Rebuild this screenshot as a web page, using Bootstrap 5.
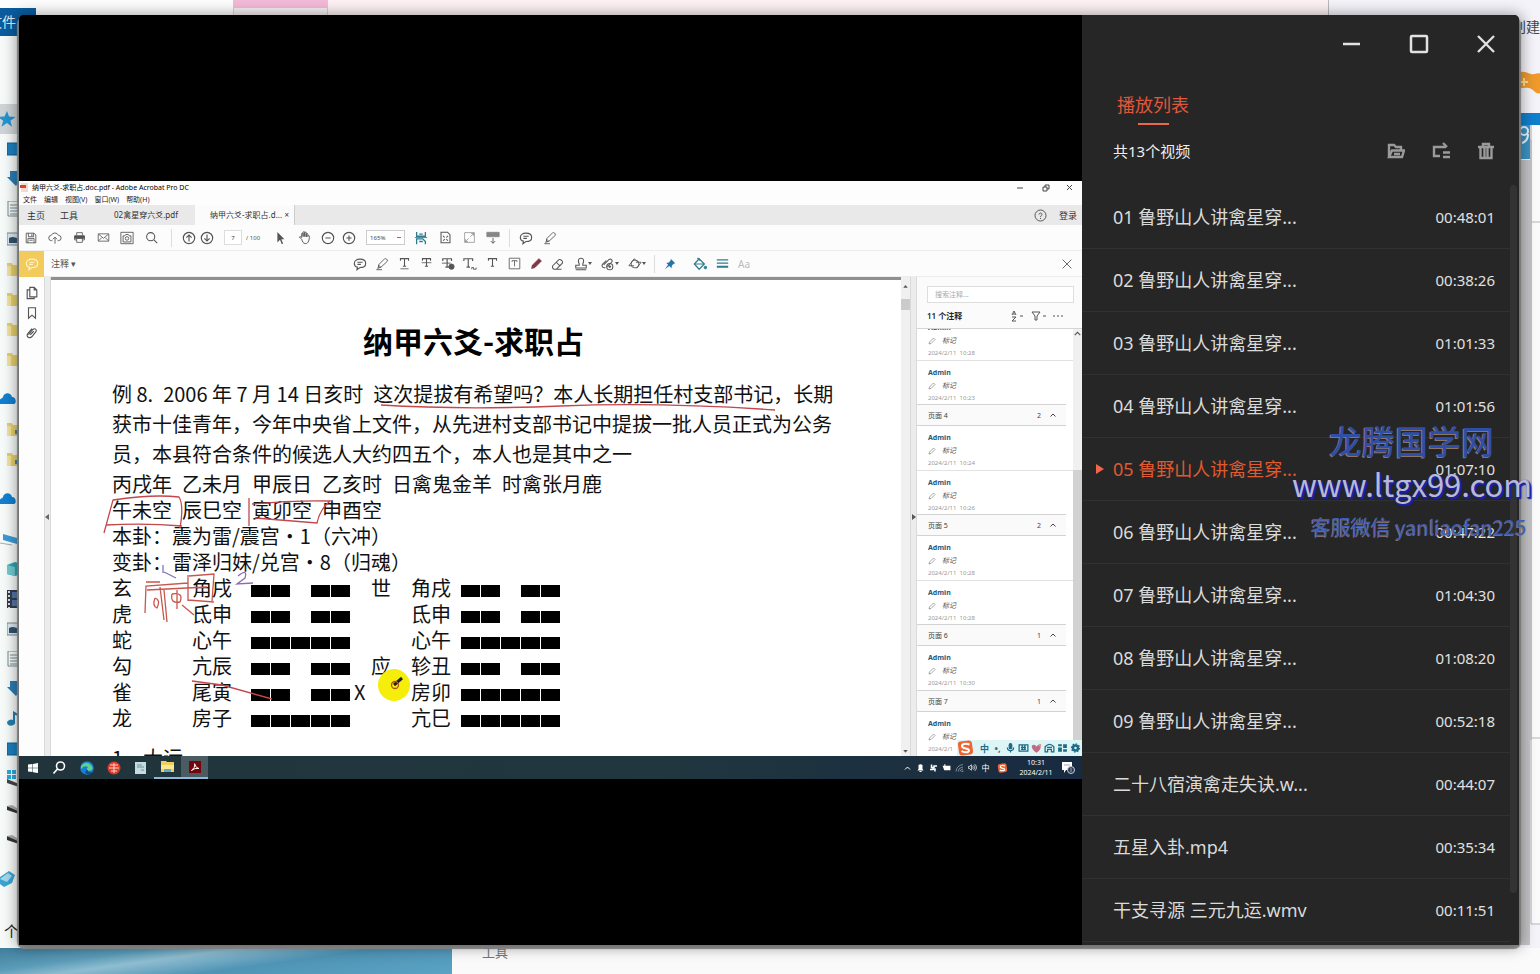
<!DOCTYPE html>
<html lang="zh-CN">
<head>
<meta charset="utf-8">
<meta name="viewport" content="width=device-width, initial-scale=1">
<title>播放列表</title>
<link href="https://cdn.jsdelivr.net/npm/bootstrap@5.3.0/dist/css/bootstrap.min.css" rel="stylesheet">
<style>
  body { font-family: "Noto Sans", "Noto Sans CJK SC", sans-serif; background: #fbfbfc; }
  button, input, select { font-family: inherit; }
  svg { display: block; flex: none; }
  .bare { border: 0; background: none; padding: 0; color: inherit; }

  /* desktop and the windows behind the player */
  .desktop { min-height: 100vh; overflow: hidden; isolation: isolate; }
  .behind { position: absolute; overflow: hidden; }
  .top-strip { left: 0; right: 212px; top: 0; height: 30px; background: linear-gradient(90deg, #fdfdfd 0 328px, #fdf1f3 328px); }
  .pink-tab { left: 233px; top: 0; width: 95px; height: 16px; background: linear-gradient(#f3bad8 0 8px, #f5f0f2 8px); border: solid #d5cdd2; border-width: 0 1px; }
  .right-window { right: 0; width: 212px; top: 0; bottom: 0; background: #f3f3f9; border-left: 1px solid #b9b9bd; font-size: 14px; color: #444; }
  .file-tab { left: 0; top: 8px; width: 36px; height: 28px; background: #0b5c9f; color: #dfeaf4; font-size: 14px; line-height: 28px; }
  .file-tab span { margin-left: -12px; }
  .explorer { left: 0; top: 36px; bottom: 25px; width: 30px; background: #f6faf8; padding-top: 68px; }
  .explorer .cell { height: 30px; width: 30px; display: flex; align-items: center; padding-left: 7px; }
  .explorer .cell.wide-ico { padding-left: 0; }
  .explorer .cell.apart { margin-top: 10px; }
  .explorer .picked { background: #cfd3d6; }
  .explorer .item-count { padding: 26px 0 0 4px; font-size: 15px; color: #222; }
  .wallpaper { left: 0; bottom: 0; width: 452px; height: 26px; background: linear-gradient(172deg, #3f7d9c 0, #5b9cb8 25%, #8fbdd0 38%, #4f94b5 60%, #5aa3c4 100%); }
  .lower-page { left: 452px; right: 0; bottom: 0; height: 26px; background: #fafafa; color: #777; font-size: 13px; line-height: 8px; padding-left: 30px; }

  /* player window */
  .player { position: relative; margin: 15px 21px 29px 19px; height: calc(100vh - 44px); min-height: 640px; border-radius: 5px 5px 0 0; overflow: hidden; background: #000; }
  .player-shadow { border-radius: 5px; box-shadow: 0 0 14px 3px rgba(0,0,0,.36), 0 2px 1px 2px #9a9a9a; left: 19px; right: 21px; top: 17px; bottom: 29px; overflow: visible; }
  .stage { min-width: 0; background: #000; }
  .recording { background: #fdfdfd; color: #333; line-height: 1; overflow: hidden; }

  .r-title { height: 13px; font-size: 7px; padding: 0 9px 0 1px; }
  .r-menu { height: 11px; font-size: 7px; gap: 7px; padding-left: 4px; }
  .r-menu a { color: #222; }
  .r-tabs { height: 20px; background: #e9e9e9; font-size: 9px; padding-right: 5px; }
  .r-tabs .home-tabs { gap: 15px; padding: 0 0 0 8px; width: 80px; }
  .doc-tab { font-size: 8px; }
  .doc-tab.first { width: 96px; padding-left: 15px; }
  .doc-tab.open { width: 100px; background: #fbfbfb; border-right: 1px solid #ccc; padding: 0 5px 0 15px; height: 20px; }
  .r-bar { height: 26px; color: #555; border-bottom: 1px solid #ededed; background: #fcfcfc; }
  .r-bar .i24 { width: 24px; display: flex; justify-content: center; }
  .r-bar .i18 { width: 18px; display: flex; justify-content: center; }
  .i22 { width: 22px; display: flex; justify-content: center; }
  .i27 { width: 27px; display: flex; justify-content: center; align-items: center; }
  .r-bar .rule { width: 1px; height: 18px; background: #ddd; }
  .page-no { width: 18px; height: 15px; border: 1px solid #ddd; font-size: 6px; padding: 0; text-align: center; color: #444; background: #fff; }
  .zoom-pick { width: 39px; height: 15px; border: 1px solid #ccc; font-size: 6px; padding: 0 3px; appearance: none; color: #444; border-radius: 0; background: #fff linear-gradient(#777,#777) 30px 6px / 4px 1px no-repeat; }
  .teal { color: #2e7c90; }
  .note-tool { width: 25px; height: 26px; background: #f3cb5c; color: #fff3cc; display: flex; align-items: center; justify-content: center; }

  .r-body { height: 479px; position: relative; }
  .rail { width: 25px; background: #fdfdfd; color: #555; padding-top: 9px; gap: 6px; }
  .splitter { width: 7px; background: #ececec; border: solid #dadada; border-width: 0 1px; color: #666; }
  .page-view { border-top: 3px solid #8f8f8f; background: #fff; position: relative; overflow: hidden; color: #111; min-width: 0; }
  .page-text { padding-left: 61px; font-family: "Noto Sans CJK SC", sans-serif; font-size: 20px; font-weight: 400; white-space: pre; }
  .page-title { font-size: 30px; font-weight: 700; line-height: 34px; margin: 43px 0 22px; padding-left: 251px; color: #000; }
  .loose { line-height: 30px; margin-bottom: 2px; }
  .tight { line-height: 26px; }
  .gua { line-height: 26px; border-collapse: collapse; table-layout: fixed; width: 449px; }
  .gua td { padding: 0; height: 26px; vertical-align: top; }
  .yao { width: 99px; height: 12px; margin-top: 10px; background: repeating-linear-gradient(90deg, #000 0 19px, #fff 19px 20px); }
  .yao.yin { background: linear-gradient(90deg, transparent 39px, #fff 39px 60px, transparent 60px), repeating-linear-gradient(90deg, #000 0 19px, #fff 19px 20px); }
  .page-tail { padding-top: 17px; }
  .ink { position: absolute; left: 0; top: 0; pointer-events: none; }
  .v-scroll { width: 9px; background: #f0f0f0; color: #555; padding: 6px 0 2px; }
  .v-scroll i { display: block; width: 9px; height: 11px; background: #cbcbcb; margin-top: 10px; }

  .notes { width: 165px; background: #fbfbfb; overflow: hidden; }
  .find-note { margin: 9px 8px 0 10px; height: 17px; border: 1px solid #ddd; font-size: 7px; padding: 0 7px; background: #fff; border-radius: 0; }
  .find-note::placeholder { color: #aaa; opacity: 1; }
  .notes-head { height: 25px; padding: 0 17px 0 10px; font-size: 8px; color: #222; }
  .notes-list { border-top: 1px solid #d5d5d5; overflow: hidden; height: 428px; background: #fff; }
  .notes-list > div:first-child { margin-top: -13px; }
  .entry { height: 44px; padding: 5px 0 0 11px; line-height: 13px; font-size: 7px; color: #666; }
  .entry b { display: block; color: #285a7c; }
  .entry em { display: flex; gap: 6px; align-items: center; color: #555; }
  .entry small { display: block; font-size: 6px; line-height: 13px; color: #999; white-space: pre; }
  .entry + .entry { border-top: 1px solid #e2e2e2; }
  .group-row { height: 22px; margin-right: 7px; border: solid #d3d3d3; border-width: 1px 0; background: #fafafa; padding: 0 9px 0 11px; font-size: 7px; color: #444; }
  .notes-scroll { width: 9px; background: #f0f0f0; border-top: 1px solid #d5d5d5; color: #555; }
  .notes-scroll i { display: block; height: 287px; margin-top: 132px; background: #d2d2d2; width: 9px; }
  .ime { position: absolute; right: 0; bottom: 0; height: 16px; background: #ddf5f5; color: #1d6b86; font-size: 9px; font-weight: 700; }
  .ime > span, .ime > svg { width: 13px; text-align: center; }
  .ime > svg.sg { width: 17px; }

  .taskbar { height: 23px; background: linear-gradient(90deg, #21343b, #20373f 60%, #182a40); color: #fff; font-size: 7px; }
  .task { width: 27px; height: 23px; display: flex; align-items: center; justify-content: center; }
  .task.run { border-bottom: 2px solid #8bb9d8; }
  .task.front { background: #4b5b62; }
  .tray > svg, .tray > span.ch { width: 13px; text-align: center; font-size: 8px; }
  .tray > svg.bell { width: 19px; }
  .clock { width: 46px; line-height: 10px; text-align: center; }

  /* playlist */
  .playlist { width: 437px; background: #262626; color: #dadada; }
  .win-ctl { height: 58px; padding-right: 16px; gap: 33px; color: #e2e2e2; }
  .win-ctl button { width: 34px; height: 30px; display: flex; align-items: center; justify-content: center; }
  .list-tab { margin: 19px 0 0 35px; font-size: 18px; line-height: 26px; color: #e0563a; width: 72px; }
  .list-tab::after { content: ""; display: block; width: 31px; height: 2px; margin: 5px auto 0; background: #e9684a; }
  .count-row { height: 28px; margin: 12px 19px 21px 31px; font-size: 15px; color: #efefef; }
  .count-row .tools { gap: 17px; color: #9a9a9a; }
  .count-row .tools button { width: 28px; display: flex; justify-content: center; }
  .tracks { overflow: hidden; margin: 0 9px 0 0; flex: 1 1 0; min-height: 0; }
  .tracks li { flex: none; }
  .track { width: 100%; height: 63px; border-bottom: 1px solid #313131; padding: 0 15px 0 31px; position: relative; font-size: 18px; text-align: left; }
  .track time { font-size: 15px; color: #e0e0e0; }
  .track.playing > span { color: #e0592f; }
  .track.playing::before { content: ""; position: absolute; left: 14px; top: 26px; border: 5px solid transparent; border-left: 8px solid #f0674a; border-right: 0; }
  .track-scroll { position: absolute; right: 2px; top: 170px; width: 7px; bottom: 52px; background: #333; border-radius: 4px; }

  /* site mark printed over the window */
  .site-mark { position: absolute; right: 0; top: 418px; width: 260px; pointer-events: none; white-space: nowrap; font-family: "Noto Sans CJK SC", sans-serif; z-index: 3; }
  .site-mark .m1 { font-size: 33px; line-height: 44px; padding-left: 49px; font-weight: 500; color: #2f4fa6; text-shadow: -1px 1px 0 #8c7466; }
  .site-mark .m2 { font-size: 31px; line-height: 44px; padding-left: 12px; color: #b9b9cf; text-shadow: 1px 1px 2px #1b22b0, 1px 1px 2px #1b22b0, 2px 2px 1px #1b22a0; }
  .site-mark .m3 { font-size: 20px; line-height: 42px; padding-left: 31px; color: #3d5db5; text-shadow: -1px 1px 0 #7d6c68; }
</style>
</head>
<body>
<svg width="0" height="0" class="position-absolute" fill="none">
  <defs>
    <g id="save"><path d="M2.500 2.500h9l2 2v9h-11zM5 2.500v4h6v-4M4.500 13.500v-5h7v5M9 3v3M6 10.500h4"/></g>
    <g id="cloudup"><path d="M5 11H4a3 3 0 0 1-.3-6A4.500 4.500 0 0 1 12 5a3 3 0 0 1 0 6h-1M8 14.500V7M5.500 9.500 8 7l2.500 2.500"/></g>
    <g id="print"><path d="M4.500 5.500V2h7v3.500M4.500 11H2V6h12v5h-2.500M4.500 9h7v5h-7z"/><path d="M2 6h12v3H2z" fill="currentColor"/></g>
    <g id="mail"><path d="M1.500 3.500h13v9h-13zM2 4l6 5 6-5M2 12l4-4M14 12l-4-4"/></g>
    <g id="snap"><path d="M1 1.500h14v13H1zM3.500 5.500h2l1-1.500h3l1 1.500h2v7h-9z"/><circle cx="8" cy="8.500" r="2"/></g>
    <g id="find"><circle cx="7" cy="7" r="5"/><path d="m11 11 4 4"/></g>
    <g id="up"><circle cx="8" cy="8" r="6.500"/><path d="M8 12V4.500M5 7.500l3-3 3 3"/></g>
    <g id="down"><circle cx="8" cy="8" r="6.500"/><path d="M8 4v7.500M5 8.500l3 3 3-3"/></g>
    <g id="arrow"><path d="M5 1v12l3-3 2 5 1.500-.7-2-4.800H13z" fill="#555" stroke="none"/></g>
    <g id="hand"><path d="M5 10 2.500 7.500c1-1 2 0 2.500.5V4c0-1 1.500-1 1.500 0v3V2.500c0-1 1.700-1 1.700 0V7 3c0-1 1.700-1 1.700 0v4.500V4.500c0-1 1.600-1 1.600 0V7c.5-1.500 2-1.200 1.800 0C13 10 12.500 14.500 9 14.500c-2.500 0-3-2-4-4.500z"/></g>
    <g id="minus"><circle cx="8" cy="8" r="6.500"/><path d="M5 8h6"/></g>
    <g id="plus"><circle cx="8" cy="8" r="6.500"/><path d="M5 8h6M8 5v6"/></g>
    <g id="fitw"><path d="M3 1v5h10V1M3 15V9h7l3 3v3M6 3.500h4M6 12h4" stroke-width="1.500"/><path d="M1 7.500h14"/></g>
    <g id="fitp"><path d="M2.500 1.500h8l3 3v10h-11zM5 6l2 2M11 6 9 8M5 12l2-2M11 12l-2-2" stroke-width="1.300"/></g>
    <g id="full"><path d="M2 2h12v12H2zM9 7l4-4M10 3h3v3M7 9l-4 4M3 10v3h3" opacity=".6"/></g>
    <g id="keyb"><path d="M1 1.500h14v5H1z" fill="currentColor" opacity=".7"/><path d="M8 8v6M5.500 11.500 8 14l2.500-2.500"/></g>
    <g id="bubble"><path d="M8 2.500c4 0 6.500 2 6.500 4.800S12 12 8 12L4.500 14.500 5 11.500C3 11 1.500 9.500 1.500 7.300 1.500 4.500 4 2.500 8 2.500zM5 6h6M5 8.500h4" stroke-width="1.300"/></g>
    <g id="pen"><path d="m4 9 7-7c1-1 4 1 3 3l-7 6.500H4zM5 9.500 3 13l4-1.500M1.500 14.500H8"/></g>
    <g id="tee"><path d="M3 4.500V2h10v2.500M8 2v9.500M6 11.500h4" stroke-width="1.300"/></g>
    <g id="box"><path d="M1.500 1.500h13v13h-13zM5 6V4.500h6V6M8 4.500v7"/></g>
    <g id="pencil"><path d="m2 14 1-4 8-8 3 3-8 8z" fill="currentColor"/></g>
    <g id="eraser"><path d="m2 10 7-7c2-1 5 2 4 4l-7 7H3.500c-1.500-1-2.500-2.500-1.500-4zM6 6l4.500 4.500M6 14h6"/></g>
    <g id="stamp"><path d="M6 8C4 4 5 1.500 8 1.500S12 4 10 8v1.500h4v3H2v-3h4zM2 14.500h12"/></g>
    <g id="clipadd"><path d="m3 9 6-6c2-2 5 1 3 3L7 11M5 12C1 13 0 9 3 7l3-3"/><circle cx="10" cy="11" r="3.500"/><path d="M8.500 11h3M10 9.500v3"/></g>
    <g id="shapes"><circle cx="8" cy="8" r="4.500"/><path d="m1 10 6-8 5 4M10 13l5-7H9M1 10h6"/></g>
    <g id="pin"><path d="m9 1 6 6-2 .5-2.500 2.500-.5 3.500L7 10.500 1 15l4.500-6L3 6.500 6.500 6 9 3z" fill="#2573ab" stroke="none"/></g>
    <g id="bucket"><path d="m7 2 6 6-6 6-5.500-6zM5 1l3 3M3 8h9" stroke-width="1.400"/><circle cx="14.200" cy="12" r="1.500" fill="currentColor"/></g>
    <g id="lines"><path d="M1 3.500h14M1 7.500h14" stroke-width="1.500"/><path d="M1 12h14" stroke-width="2.500"/></g>
    <g id="cross"><path d="m3 3 10 10M13 3 3 13"/></g>
    <g id="pages"><path d="M5.500 1.500h5l3 3v8h-8zM10.500 1.500v3h3M5.500 4.500h-3v10h8v-2" stroke-width="1.300"/></g>
    <g id="mark-i"><path d="M4 2h8v12l-4-3.500L4 14z" stroke-width="1.300"/></g>
    <g id="clip"><path d="m4 10 5-6c2-2 5 0 3.500 2.500L8 12c-3 3-7 0-5-3l5-6M6 10l4-4" stroke-width="1.300"/></g>
    <g id="chev"><path d="m3 11 5-5 5 5" stroke-width="2"/></g>
    <g id="folder"><path d="M0 2h5l1 2h8v11H0z" fill="#e6cf6c" stroke="none"/><path d="M0 5h4v10H0z" fill="#f3e29a" stroke="none"/></g>
    <g id="page-i"><path d="M1 0h14v15H1zM3 4h10M3 7h10M3 10h10M3 13h10" stroke="#758d92"/></g>
    <g id="pic"><path d="M0 2h15v12H0z" fill="#d9e6ee" stroke="#7b8a94"/><path d="M2 7q5-3 11 2v3H2z" fill="#31526d" stroke="none"/></g>
    <g id="screen"><path d="M0 2h15v12H0z" fill="#1c7fbd" stroke="#0b609b"/></g>
    <g id="dl"><path d="M3 0h10v6h3l-7 9-9-9h3z" fill="#2a7cb5" stroke="none"/></g>
    <g id="disk"><path d="m0 5 12 5v3L0 9z" fill="#333" stroke="none"/><path d="m0 5 5-1 8 5v2z" fill="#aaa" stroke="none"/></g>
    <g id="cloud-i"><path d="M-2 13C-2 8 2 8 3 6c1-5 8-5 9 0 4 0 5 6 2 7H0z" fill="#1180d0" stroke="none"/></g>
    <g id="sogou"><rect x="1" y="1" width="14" height="14" rx="3" fill="#ef6430" stroke="none" transform="rotate(-8 8 8)"/><path d="M12 4.500C8 3 4 4 4.500 6.500S12 8 11.500 10.500 6 12.500 4 11" stroke="#fff" stroke-width="2"/></g>
  </defs>
</svg>

<div class="desktop position-relative">
  <div class="behind top-strip"></div>
  <div class="behind pink-tab"></div>
  <div class="behind right-window">
    <svg width="212" height="974" fill="none">
      <path d="M190 140h12v600" stroke="#aaa"/><path d="M191 160h10v785h-10z" fill="#c4c4c6"/><path d="M203 124h9v800h-9z" fill="#fafafa"/>
      <path d="M202 124v800M202 222h10M202 738h10M202 924h10" stroke="#b5b5bb"/>
      <path d="M188 73c6-3 10 0 14 1s6-2 10 0v19c-6 2-7-4-12-5s-8 1-12 0z" fill="#ef9a2b"/><path d="M191 82h8m-4-4v8" stroke="#ffe18b" stroke-width="2"/>
      <path d="M188 113h24v12h-24z" fill="#0f7fcd"/><path d="M188 125h13v34h-13z" fill="#3b93c4"/><circle cx="195" cy="131" r="4" stroke="#e7f3fa" stroke-width="2"/><path d="M199 134q0 7-6 9" stroke="#e7f3fa" stroke-width="2"/>
    </svg>
    <span class="position-absolute end-0" style="top:16px">创建</span>
  </div>
  <div class="behind explorer">
    <div class="cell wide-ico picked"><svg width="16" height="16" viewBox="0 0 16 16"><path d="m7 0 2 5.500 6.500.5-5 3.700 1.500 6L7 12l-5.500 3.700 1.700-6L-2 6l6.500-.5z" fill="#2593cf"/></svg></div>
    <div class="cell"><svg width="16" height="16" fill="none"><use href="#screen"/></svg></div>
    <div class="cell"><svg width="16" height="16"><use href="#dl"/></svg></div>
    <div class="cell"><svg width="16" height="16" fill="none"><use href="#page-i"/></svg></div>
    <div class="cell"><svg width="16" height="16"><use href="#pic"/></svg></div>
    <div class="cell"><svg width="16" height="16"><use href="#folder"/></svg></div>
    <div class="cell"><svg width="16" height="16"><use href="#folder"/></svg></div>
    <div class="cell"><svg width="16" height="16"><use href="#folder"/></svg></div>
    <div class="cell"><svg width="16" height="16"><use href="#folder"/></svg></div>
    <div class="cell wide-ico apart"><svg width="16" height="16"><use href="#cloud-i"/></svg></div>
    <div class="cell"><svg width="16" height="16"><use href="#folder"/><path d="M8 9h6v4H8z" fill="#3c86b4"/></svg></div>
    <div class="cell"><svg width="16" height="16"><use href="#folder"/><path d="M8 9h6v4H8z" fill="#3c86b4"/></svg></div>
    <div class="cell wide-ico apart"><svg width="16" height="16"><use href="#cloud-i"/></svg></div>
    <div class="cell wide-ico apart"><svg width="20" height="16"><path d="m3 3 14 4v6L3 9z" fill="#3b9ad6"/><path d="m0 12 12 2" stroke="#aaa"/></svg></div>
    <div class="cell"><svg width="16" height="16"><path d="m0 4 8-3 7 2v10l-7 2-8-2z" fill="#2ba4b2"/><path d="m0 4 8 2v9l-8-2z" fill="#6fcbd1"/></svg></div>
    <div class="cell"><svg width="16" height="18"><path d="M0 0h16v18H0z" fill="#333b4d"/><path d="M5 2h9v6H5zM5 10h9v6H5z" fill="#5475a8"/><path d="M2 1v17" stroke="#ddd" stroke-width="2" stroke-dasharray="2 2"/></svg></div>
    <div class="cell"><svg width="16" height="16"><use href="#pic"/></svg></div>
    <div class="cell"><svg width="16" height="16" fill="none"><use href="#page-i"/></svg></div>
    <div class="cell"><svg width="16" height="16"><use href="#dl"/></svg></div>
    <div class="cell"><svg width="16" height="16"><path d="M8 0v11a4 3 0 1 1-2-2V0q6 3 8 7-3-3-6-3z" fill="#247fb4"/></svg></div>
    <div class="cell"><svg width="16" height="16" fill="none"><use href="#screen"/></svg></div>
    <div class="cell"><svg width="16" height="18"><path d="m0 9 12 5v3L0 13z" fill="#444"/><path d="M0 0h4v4H0zM5 0h4v4H5zM0 5h4v4H0zM5 5h4v4H5z" fill="#28a9e0"/></svg></div>
    <div class="cell"><svg width="16" height="16"><use href="#disk"/></svg></div>
    <div class="cell"><svg width="16" height="16"><use href="#disk"/></svg></div>
    <div class="cell wide-ico apart"><svg width="18" height="18"><path d="m0 7 9-6 6 4-3 8-8 4-4-3z" fill="#3aa5d2"/><path d="m0 9 7 3 5-6-4-3z" fill="#a4d6ea"/></svg></div>
    <div class="item-count">个</div>
  </div>
  <div class="behind file-tab"><span>文件</span></div>
  <div class="behind wallpaper"></div>
  <div class="behind lower-page">工具</div>
  <div class="behind player-shadow"></div>

  <main class="player d-flex">
    <section class="stage flex-grow-1 d-flex flex-column justify-content-center">
      <div class="recording">
        <div class="r-title d-flex align-items-center">
          <svg width="8" height="9" class="me-1"><path d="M1 0h7v9H1z" fill="#f6d9d0"/><path d="M0 2h6v3H0z" fill="#d8462e"/></svg>
          <span class="text-black">纳甲六爻-求职占.doc.pdf - Adobe Acrobat Pro DC</span>
          <svg width="56" height="8" class="ms-auto" fill="none" stroke="#444"><path d="M0 4h6M26 3h4v4h-4zM28 3V1h4v4h-2M50 1l5 5M55 1l-5 5"/></svg>
        </div>
        <nav class="r-menu d-flex align-items-center">
          <a class="text-decoration-none" href="#">文件</a><a class="text-decoration-none" href="#">编辑</a><a class="text-decoration-none" href="#">视图(V)</a><a class="text-decoration-none" href="#">窗口(W)</a><a class="text-decoration-none" href="#">帮助(H)</a>
        </nav>
        <div class="r-tabs d-flex align-items-center">
          <div class="home-tabs d-flex"><button class="bare">主页</button><button class="bare">工具</button></div>
          <button class="bare doc-tab first text-start">02禽星穿六爻.pdf</button>
          <div class="doc-tab open d-flex align-items-center justify-content-between"><span>纳甲六爻-求职占.d...</span><button class="bare" aria-label="关闭标签">×</button></div>
          <svg class="ms-auto me-2" width="13" height="13" viewBox="0 0 13 13" fill="none" stroke="#555"><circle cx="6.500" cy="6.500" r="5.500"/><path d="M5 5.500c0-2 3-2 3 0 0 1-1.500 1-1.500 2.500M6.500 9v1"/></svg>
          <button class="bare ms-1">登录</button>
        </div>
        <div class="r-bar d-flex align-items-center">
          <span class="i24"><svg width="14" height="14" viewBox="0 0 16 16" fill="none" stroke="currentColor"><use href="#save"/></svg></span>
          <span class="i24"><svg width="14" height="14" viewBox="0 0 16 16" fill="none" stroke="currentColor"><use href="#cloudup"/></svg></span>
          <span class="i24"><svg width="13" height="13" viewBox="0 0 16 16" fill="none" stroke="currentColor"><use href="#print"/></svg></span>
          <span class="i24"><svg width="13" height="13" viewBox="0 0 16 16" fill="none" stroke="currentColor"><use href="#mail"/></svg></span>
          <span class="i24"><svg width="14" height="14" viewBox="0 0 16 16" fill="none" stroke="currentColor"><use href="#snap"/></svg></span>
          <span class="i24"><svg width="13" height="13" viewBox="0 0 16 16" fill="none" stroke="currentColor" stroke-width="1.300"><use href="#find"/></svg></span>
          <span class="rule mx-2"></span>
          <span class="i18"><svg width="14" height="14" viewBox="0 0 16 16" fill="none" stroke="currentColor" stroke-width="1.300"><use href="#up"/></svg></span>
          <span class="i18 me-2"><svg width="14" height="14" viewBox="0 0 16 16" fill="none" stroke="currentColor" stroke-width="1.300"><use href="#down"/></svg></span>
          <input class="page-no" aria-label="页码" value="7"><span class="ps-1 pe-2" style="font-size:6px">/ 100</span>
          <span class="i24"><svg width="14" height="14" viewBox="0 0 16 16"><use href="#arrow"/></svg></span>
          <span class="i24"><svg width="15" height="15" viewBox="0 0 16 16" fill="none" stroke="currentColor"><use href="#hand"/></svg></span>
          <span class="i24"><svg width="14" height="14" viewBox="0 0 16 16" fill="none" stroke="currentColor" stroke-width="1.300"><use href="#minus"/></svg></span>
          <span class="i18 me-1"><svg width="14" height="14" viewBox="0 0 16 16" fill="none" stroke="currentColor" stroke-width="1.300"><use href="#plus"/></svg></span>
          <select class="zoom-pick ms-1 me-1" aria-label="缩放"><option>165%</option></select>
          <span class="i24 teal"><svg width="14" height="14" viewBox="0 0 16 16" fill="none" stroke="currentColor"><use href="#fitw"/></svg></span>
          <span class="i24"><svg width="13" height="13" viewBox="0 0 16 16" fill="none" stroke="currentColor"><use href="#fitp"/></svg></span>
          <span class="i24"><svg width="13" height="13" viewBox="0 0 16 16" fill="none" stroke="currentColor"><use href="#full"/></svg></span>
          <span class="i24"><svg width="14" height="14" viewBox="0 0 16 16" fill="none" stroke="currentColor"><use href="#keyb"/></svg></span>
          <span class="rule mx-1"></span>
          <span class="i24"><svg width="14" height="14" viewBox="0 0 16 16" fill="none" stroke="currentColor"><use href="#bubble"/></svg></span>
          <span class="i24"><svg width="14" height="14" viewBox="0 0 16 16" fill="none" stroke="currentColor"><use href="#pen"/></svg></span>
        </div>
        <div class="r-bar d-flex align-items-center">
          <span class="note-tool"><svg width="14" height="14" viewBox="0 0 16 16" fill="none" stroke="currentColor"><use href="#bubble"/></svg></span>
          <span style="font-size:9px;padding-left:7px;width:305px">注释 ▾</span>
          <span class="i22"><svg width="14" height="14" viewBox="0 0 16 16" fill="none" stroke="currentColor"><use href="#bubble"/></svg></span>
          <span class="i22"><svg width="14" height="14" viewBox="0 0 16 16" fill="none" stroke="currentColor"><use href="#pen"/></svg></span>
          <span class="i22"><svg width="13" height="13" viewBox="0 0 16 16" fill="none" stroke="currentColor"><use href="#tee"/><path d="M3 14.500h10"/></svg></span>
          <span class="i22"><svg width="13" height="13" viewBox="0 0 16 16" fill="none" stroke="currentColor"><use href="#tee"/><path d="M2 7h12"/></svg></span>
          <span class="i22"><svg width="14" height="14" viewBox="0 0 16 16" fill="none" stroke="currentColor"><use href="#tee" x="-1"/><path d="M1 7h10"/><circle cx="12" cy="11" r="3" fill="currentColor"/></svg></span>
          <span class="i22"><svg width="14" height="14" viewBox="0 0 16 16" fill="none" stroke="currentColor"><use href="#tee" x="-2"/><path d="M10 14v-2h2v2h3v-2"/></svg></span>
          <span class="i22"><svg width="13" height="13" viewBox="0 0 16 16" fill="none" stroke="currentColor"><use href="#tee"/></svg></span>
          <span class="i22"><svg width="13" height="13" viewBox="0 0 16 16" fill="none" stroke="currentColor"><use href="#box"/></svg></span>
          <span class="i22" style="color:#7c3843"><svg width="13" height="13" viewBox="0 0 16 16" fill="none" stroke="currentColor"><use href="#pencil"/></svg></span>
          <span class="i22"><svg width="14" height="14" viewBox="0 0 16 16" fill="none" stroke="currentColor" stroke-width="1.200"><use href="#eraser"/></svg></span>
          <span class="i27"><svg width="14" height="14" viewBox="0 0 16 16" fill="none" stroke="currentColor" stroke-width="1.200"><use href="#stamp"/></svg><svg width="4" height="3"><path d="M0 0h4L2 3z" fill="#555"/></svg></span>
          <span class="i27"><svg width="14" height="14" viewBox="0 0 16 16" fill="none" stroke="currentColor" stroke-width="1.200"><use href="#clipadd"/></svg><svg width="4" height="3"><path d="M0 0h4L2 3z" fill="#555"/></svg></span>
          <span class="i27"><svg width="14" height="14" viewBox="0 0 16 16" fill="none" stroke="currentColor"><use href="#shapes"/></svg><svg width="4" height="3"><path d="M0 0h4L2 3z" fill="#555"/></svg></span>
          <span class="rule mx-1"></span>
          <span class="i22"><svg width="12" height="12" viewBox="0 0 16 16"><use href="#pin"/></svg></span>
          <span class="i22 ms-2 teal"><svg width="14" height="14" viewBox="0 0 16 16" fill="none" stroke="currentColor"><use href="#bucket"/></svg></span>
          <span class="i22 teal"><svg width="13" height="13" viewBox="0 0 16 16" fill="none" stroke="currentColor"><use href="#lines"/></svg></span>
          <span class="i22" style="font-size:10px;color:#bbb">Aa</span>
          <button class="bare ms-auto me-2" aria-label="关闭工具栏"><svg width="14" height="14" viewBox="0 0 16 16" fill="none" stroke="currentColor"><use href="#cross"/></svg></button>
        </div>

        <div class="r-body d-flex">
          <div class="rail d-flex flex-column align-items-center">
            <svg width="14" height="14" viewBox="0 0 16 16" fill="none" stroke="currentColor"><use href="#pages"/></svg>
            <svg width="14" height="14" viewBox="0 0 16 16" fill="none" stroke="currentColor"><use href="#mark-i"/></svg>
            <svg width="14" height="14" viewBox="0 0 16 16" fill="none" stroke="currentColor"><use href="#clip"/></svg>
          </div>
          <div class="splitter d-flex align-items-center"><svg width="5" height="8"><path d="M4 1v6L0 4z" fill="#666"/></svg></div>
          <article class="page-view flex-grow-1">
            <div class="page-text"><h1 class="page-title">纳甲六爻-求职占</h1><div class="loose">例 8.&ensp;2006 年 7 月 14 日亥时&ensp;这次提拔有希望吗？本人长期担任村支部书记，长期
获市十佳青年，今年中央省上文件，从先进村支部书记中提拔一批人员正式为公务
员，本县符合条件的候选人大约四五个，本人也是其中之一</div><div class="tight">丙戌年&ensp;乙未月&ensp;甲辰日&ensp;乙亥时&ensp;日禽鬼金羊&ensp;时禽张月鹿
午未空&ensp;辰巳空&ensp;寅卯空&ensp;申酉空
本卦：震为雷/震宫·1（六冲）
变卦：雷泽归妹/兑宫·8（归魂）</div><table class="gua"><colgroup><col style="width:80px"><col style="width:59px"><col style="width:120px"><col style="width:40px"><col style="width:50px"><col style="width:100px"></colgroup>
<tr><td>玄</td><td>角戌</td><td><div class="yao yin"></div></td><td>世</td><td>角戌</td><td><div class="yao yin"></div></td></tr>
<tr><td>虎</td><td>氐申</td><td><div class="yao yin"></div></td><td></td><td>氐申</td><td><div class="yao yin"></div></td></tr>
<tr><td>蛇</td><td>心午</td><td><div class="yao"></div></td><td></td><td>心午</td><td><div class="yao"></div></td></tr>
<tr><td>勾</td><td>亢辰</td><td><div class="yao yin"></div></td><td>应</td><td>轸丑</td><td><div class="yao yin"></div></td></tr>
<tr><td>雀</td><td>尾寅</td><td><div class="d-flex"><div class="yao yin"></div><span class="ps-1">X</span></div></td><td></td><td>房卯</td><td><div class="yao"></div></td></tr>
<tr><td>龙</td><td>房子</td><td><div class="yao"></div></td><td></td><td>亢巳</td><td><div class="yao"></div></td></tr>
</table><div class="page-tail">1、大运</div></div>
            <svg class="ink" width="800" height="476" fill="none" stroke="#c4474b" stroke-width="1.300">
              <g transform="translate(-51 -280)">
                <path d="M381 405q80 5 180 1t214 4" />
                <path d="M104 533l9-33q40-6 66-3 5 8 1 31M106 525q40-2 76 1M249 498v28M252 504q40-4 78-3-10 8-13 22l-62-5"/>
                <path d="M163 565v8M164 572l12 6" stroke="#8074b8"/><path d="M238 576q10-8 7 2l-8 6 16-1" stroke="#8c6db4"/>
                <path d="M146 582h14M145 613l1-27 42-3M147 590l60-3M160 587l4 33M155 598q6 2 2 10-5-2-2-10M164 590l3 32M188 575v26M189 576l25-2-2 27M188 600l26 2M172 594q12-2 8 8-10 2-8-8M177 590v19M182 605l12 10" stroke="#c9564c"/>
                <path d="M192 681l30 4 50 14"/>
                <circle cx="394" cy="685" r="16" fill="#f5ed0a" stroke="none"/><path d="m394 685 8-7" stroke="#222" stroke-width="3"/><circle cx="395" cy="685" r="3.500" stroke="#b5501a"/>
              </g>
            </svg>
          </article>
          <div class="v-scroll d-flex flex-column"><svg width="9" height="6" viewBox="0 0 16 10"><path d="m4 8 4-5 4 5z" fill="#555"/></svg><i></i><svg width="9" height="6" viewBox="0 0 16 10" class="mt-auto"><path d="m4 3 4 5 4-5z" fill="#555"/></svg></div>
          <div class="splitter d-flex align-items-center"><svg width="5" height="8"><path d="M1 1v6l4-3z" fill="#555"/></svg></div>
          <aside class="notes">
            <div class="d-flex"><input class="find-note flex-grow-1" aria-label="搜索注释" placeholder="搜索注释..."></div>
            <div class="notes-head d-flex align-items-center"><b class="fw-semibold me-auto">11 个注释</b>
              <svg width="56" height="12" fill="none" stroke="#555"><path d="M3 5l2-4 2 4M4 4h2M3 7h4l-4 4h4M11 6h3M23 2h8l-3 4v4h-2V6zM34 6h3M44 6h2M48 6h2M52 6h2" /></svg></div>
            <div class="d-flex">
              <div class="notes-list flex-grow-1">
                <div class="entry"><b>Admin</b><em><svg width="8" height="8" viewBox="0 0 16 16" fill="none" stroke="currentColor"><path d="m2 14 1-4 8-8 3 3-8 8z"/></svg>标记</em><small>2024/2/11  10:28</small></div>
                <div class="entry"><b>Admin</b><em><svg width="8" height="8" viewBox="0 0 16 16" fill="none" stroke="currentColor"><path d="m2 14 1-4 8-8 3 3-8 8z"/></svg>标记</em><small>2024/2/11  10:23</small></div>
                <div class="group-row d-flex align-items-center"><span class="me-auto">页面 4</span>2<svg class="ms-2" width="8" height="8" viewBox="0 0 16 16" fill="none" stroke="currentColor"><use href="#chev"/></svg></div>
                <div class="entry"><b>Admin</b><em><svg width="8" height="8" viewBox="0 0 16 16" fill="none" stroke="currentColor"><path d="m2 14 1-4 8-8 3 3-8 8z"/></svg>标记</em><small>2024/2/11  10:24</small></div>
                <div class="entry"><b>Admin</b><em><svg width="8" height="8" viewBox="0 0 16 16" fill="none" stroke="currentColor"><path d="m2 14 1-4 8-8 3 3-8 8z"/></svg>标记</em><small>2024/2/11  10:26</small></div>
                <div class="group-row d-flex align-items-center"><span class="me-auto">页面 5</span>2<svg class="ms-2" width="8" height="8" viewBox="0 0 16 16" fill="none" stroke="currentColor"><use href="#chev"/></svg></div>
                <div class="entry"><b>Admin</b><em><svg width="8" height="8" viewBox="0 0 16 16" fill="none" stroke="currentColor"><path d="m2 14 1-4 8-8 3 3-8 8z"/></svg>标记</em><small>2024/2/11  10:28</small></div>
                <div class="entry"><b>Admin</b><em><svg width="8" height="8" viewBox="0 0 16 16" fill="none" stroke="currentColor"><path d="m2 14 1-4 8-8 3 3-8 8z"/></svg>标记</em><small>2024/2/11  10:28</small></div>
                <div class="group-row d-flex align-items-center"><span class="me-auto">页面 6</span>1<svg class="ms-2" width="8" height="8" viewBox="0 0 16 16" fill="none" stroke="currentColor"><use href="#chev"/></svg></div>
                <div class="entry"><b>Admin</b><em><svg width="8" height="8" viewBox="0 0 16 16" fill="none" stroke="currentColor"><path d="m2 14 1-4 8-8 3 3-8 8z"/></svg>标记</em><small>2024/2/11  10:30</small></div>
                <div class="group-row d-flex align-items-center"><span class="me-auto">页面 7</span>1<svg class="ms-2" width="8" height="8" viewBox="0 0 16 16" fill="none" stroke="currentColor"><use href="#chev"/></svg></div>
                <div class="entry"><b>Admin</b><em><svg width="8" height="8" viewBox="0 0 16 16" fill="none" stroke="currentColor"><path d="m2 14 1-4 8-8 3 3-8 8z"/></svg>标记</em><small>2024/2/1</small></div>
              </div>
              <div class="notes-scroll"><svg width="9" height="9" viewBox="0 0 16 16" fill="none" stroke="currentColor"><use href="#chev"/></svg><i></i></div>
            </div>
          </aside>
          <div class="ime d-flex align-items-center">
            <svg class="sg" width="17" height="16" viewBox="0 0 16 16" fill="none"><use href="#sogou"/></svg>
            <span class="ms-1">中</span><span>•,</span>
            <svg width="10" height="10" viewBox="0 0 16 16" fill="none" stroke="currentColor" stroke-width="2"><rect x="6" y="1" width="4" height="8" rx="2" fill="currentColor"/><path d="M3 7q0 5 5 5t5-5M8 12v3"/></svg>
            <svg width="10" height="10" viewBox="0 0 16 16" fill="none" stroke="currentColor" stroke-width="2"><path d="M1 3h14v10H1zM4 7h8M4 10h8M6 4v5M10 4v5"/></svg>
            <svg width="11" height="11" viewBox="0 0 16 16"><path d="M1 4q4-3 7 1 3-4 6-1 1 6-6 10Q1 10 1 4" fill="#c06b86"/><circle cx="13" cy="3" r="2" fill="#e98"/></svg>
            <svg width="10" height="10" viewBox="0 0 16 16" fill="none" stroke="currentColor" stroke-width="2"><path d="M1 14V6q7-8 14 0v8h-4v-4H5v4zM4 7h8"/></svg>
            <svg width="10" height="10" viewBox="0 0 16 16" fill="currentColor"><path d="M1 2h6v3H1zM9 2h6v6H9zM1 7h6v7H1zM9 10h6v4H9z"/></svg>
            <svg width="10" height="10" viewBox="0 0 16 16" fill="none" stroke="currentColor" stroke-width="4"><circle cx="8" cy="8" r="4"/><circle cx="8" cy="8" r="6.500" stroke-width="2" stroke-dasharray="2.500 2.500"/></svg>
          </div>
        </div>

        <div class="taskbar d-flex align-items-center">
          <span class="task"><svg width="10" height="10"><path d="M0 1.500 4.500 1v3.800H0zM5 1l5-1v4.800H5zM0 5.300h4.500V9L0 8.500zM5 5.300h5V10L5 9.200z" fill="#fff"/></svg></span>
          <span class="task"><svg width="13" height="13" fill="none" stroke="#fff" stroke-width="1.600"><circle cx="7.500" cy="5" r="4"/><path d="m4.500 8-4 4.500"/></svg></span>
          <span class="task"><svg width="14" height="14"><circle cx="7" cy="7" r="6.800" fill="#1b7fd0"/><path d="M1 5q5-6 10-1 4 5-2 6-4-1-1-4-4-2-7 2z" fill="#5fd189"/><path d="M7 8q1 4 6 3-4 4-8 1z" fill="#0f4f94"/></svg></span>
          <span class="task"><svg width="14" height="14"><circle cx="7" cy="7" r="6.500" fill="#de3b2c"/><path d="M3 4h8M2 7h10M4 10h6M7 2v10" stroke="#ffd2c8"/></svg></span>
          <span class="task"><svg width="11" height="13"><path d="M0 1h11v12H0z" fill="#c5dbe2"/><path d="M2 4h5M2 6h7M6 9h3" stroke="#6f929d"/></svg></span>
          <span class="task run"><svg width="13" height="11"><path d="M0 0h5l1 1h7v10H0z" fill="#efcf5b"/><path d="M0 4h13v4H0z" fill="#f8e793"/><path d="M3 8h7v3H3z" fill="#6aa5c4"/></svg></span>
          <span class="task run front"><svg width="12" height="12" fill="none"><path d="M0 0h12v12H0z" fill="#74060b"/><path d="M2.500 9.500Q6 7 6 3q-1-1 0 1 1 3 4 3.500-4-1-7.500 2" stroke="#fff"/></svg></span>
          <div class="tray d-flex align-items-center ms-auto">
            <svg width="8" height="8" viewBox="0 0 16 16" fill="none" stroke="#fff"><use href="#chev"/></svg>
            <svg width="8" height="8" viewBox="0 0 16 16" fill="#fff"><path d="M4 2q4-3 8 0v8l2 3H2l2-3zM6 14h4v2H6z"/></svg>
            <svg width="8" height="8" viewBox="0 0 16 16" fill="none" stroke="#fff" stroke-width="3"><path d="M4 1v6h4M15 4H9v4M1 11h6V8M11 15v-5H8"/></svg>
            <svg width="9" height="9" viewBox="0 0 16 16" fill="#fff"><path d="M1 5h3V2h2v3h9v8H4z"/></svg>
            <svg width="8" height="8" viewBox="0 0 16 16" fill="none" stroke="#dde"><path d="M1 15Q2 3 15 1M5 15q1-8 10-9M9 15q1-4 6-5M12 15h3v-2"/></svg>
            <svg width="9" height="9" viewBox="0 0 16 16" fill="none" stroke="#fff" stroke-width="1.300"><path d="M1 6h2l3-3v10l-3-3H1zM8 6q2 2 0 4M10 4q4 4 0 8M12 2q6 6 0 12"/></svg>
            <span class="ch">中</span>
            <svg width="10" height="10" viewBox="0 0 16 16" fill="none" class="ms-1"><use href="#sogou"/></svg>
            <time class="clock ms-1">10:31<br>2024/2/11</time>
            <svg class="bell me-1" width="19" height="14" fill="none"><path d="M3 1h10v8H7l-2 3V9H3z" fill="#fff"/><circle cx="12" cy="9" r="3.500" fill="#263a50" stroke="#ccd"/><path d="M12 7v4M5 4h6" stroke="#9ab"/></svg>
          </div>
        </div>
      </div>
    </section>

    <aside class="playlist position-relative d-flex flex-column flex-shrink-0">
      <div class="win-ctl d-flex align-items-center justify-content-end">
        <button class="bare" aria-label="最小化"><svg width="20" height="20" fill="none" stroke="currentColor" stroke-width="2.500"><path d="M1 10h17"/></svg></button>
        <button class="bare" aria-label="最大化"><svg width="20" height="20" fill="none" stroke="currentColor" stroke-width="2.500"><rect x="2" y="2" width="16" height="16" rx="1"/></svg></button>
        <button class="bare" aria-label="关闭"><svg width="20" height="20" fill="none" stroke="currentColor" stroke-width="2.300"><path d="m2 2 16 16M18 2 2 18"/></svg></button>
      </div>
      <button class="bare list-tab">播放列表</button>
      <div class="count-row d-flex align-items-center">
        <span class="me-auto">共13个视频</span>
        <div class="tools d-flex">
          <button class="bare" aria-label="打开文件夹"><svg width="18" height="18" fill="none" stroke="currentColor" stroke-width="2.400"><path d="M2 15V3h5l2 2h5v3M2 15 5 8.500h12L15 15zM7 12h6"/></svg></button>
          <button class="bare" aria-label="播放顺序"><svg width="18" height="18" fill="none" stroke="currentColor" stroke-width="2.400"><path d="M8 14H2V5h12M11 1l4 4M11 10.500h7M11 15h7"/></svg></button>
          <button class="bare" aria-label="清空"><svg width="18" height="18" fill="none" stroke="currentColor" stroke-width="2.400"><path d="M1 5h16M6 4V2h6v2M3.500 5v11h11V5M7.500 6v9M10.500 6v9"/></svg></button>
        </div>
      </div>
      <ul class="tracks list-unstyled d-flex flex-column">
        <li><button class="bare track d-flex align-items-center justify-content-between"><span>01 鲁野山人讲禽星穿...</span><time>00:48:01</time></button></li>
        <li><button class="bare track d-flex align-items-center justify-content-between"><span>02 鲁野山人讲禽星穿...</span><time>00:38:26</time></button></li>
        <li><button class="bare track d-flex align-items-center justify-content-between"><span>03 鲁野山人讲禽星穿...</span><time>01:01:33</time></button></li>
        <li><button class="bare track d-flex align-items-center justify-content-between"><span>04 鲁野山人讲禽星穿...</span><time>01:01:56</time></button></li>
        <li><button class="bare track playing d-flex align-items-center justify-content-between"><span>05 鲁野山人讲禽星穿...</span><time>01:07:10</time></button></li>
        <li><button class="bare track d-flex align-items-center justify-content-between"><span>06 鲁野山人讲禽星穿...</span><time>00:47:22</time></button></li>
        <li><button class="bare track d-flex align-items-center justify-content-between"><span>07 鲁野山人讲禽星穿...</span><time>01:04:30</time></button></li>
        <li><button class="bare track d-flex align-items-center justify-content-between"><span>08 鲁野山人讲禽星穿...</span><time>01:08:20</time></button></li>
        <li><button class="bare track d-flex align-items-center justify-content-between"><span>09 鲁野山人讲禽星穿...</span><time>00:52:18</time></button></li>
        <li><button class="bare track d-flex align-items-center justify-content-between"><span>二十八宿演禽走失诀.w...</span><time>00:44:07</time></button></li>
        <li><button class="bare track d-flex align-items-center justify-content-between"><span>五星入卦.mp4</span><time>00:35:34</time></button></li>
        <li><button class="bare track d-flex align-items-center justify-content-between"><span>干支寻源 三元九运.wmv</span><time>00:11:51</time></button></li>
      </ul>
      <div class="track-scroll"></div>
    </aside>
  </main>

  <div class="site-mark">
    <div class="m1">龙腾国学网</div>
    <div class="m2">www.ltgx99.com</div>
    <div class="m3">客服微信 yanliaofan225</div>
  </div>
</div>
<script src="https://cdn.jsdelivr.net/npm/bootstrap@5.3.0/dist/js/bootstrap.bundle.min.js"></script>
</body>
</html>
